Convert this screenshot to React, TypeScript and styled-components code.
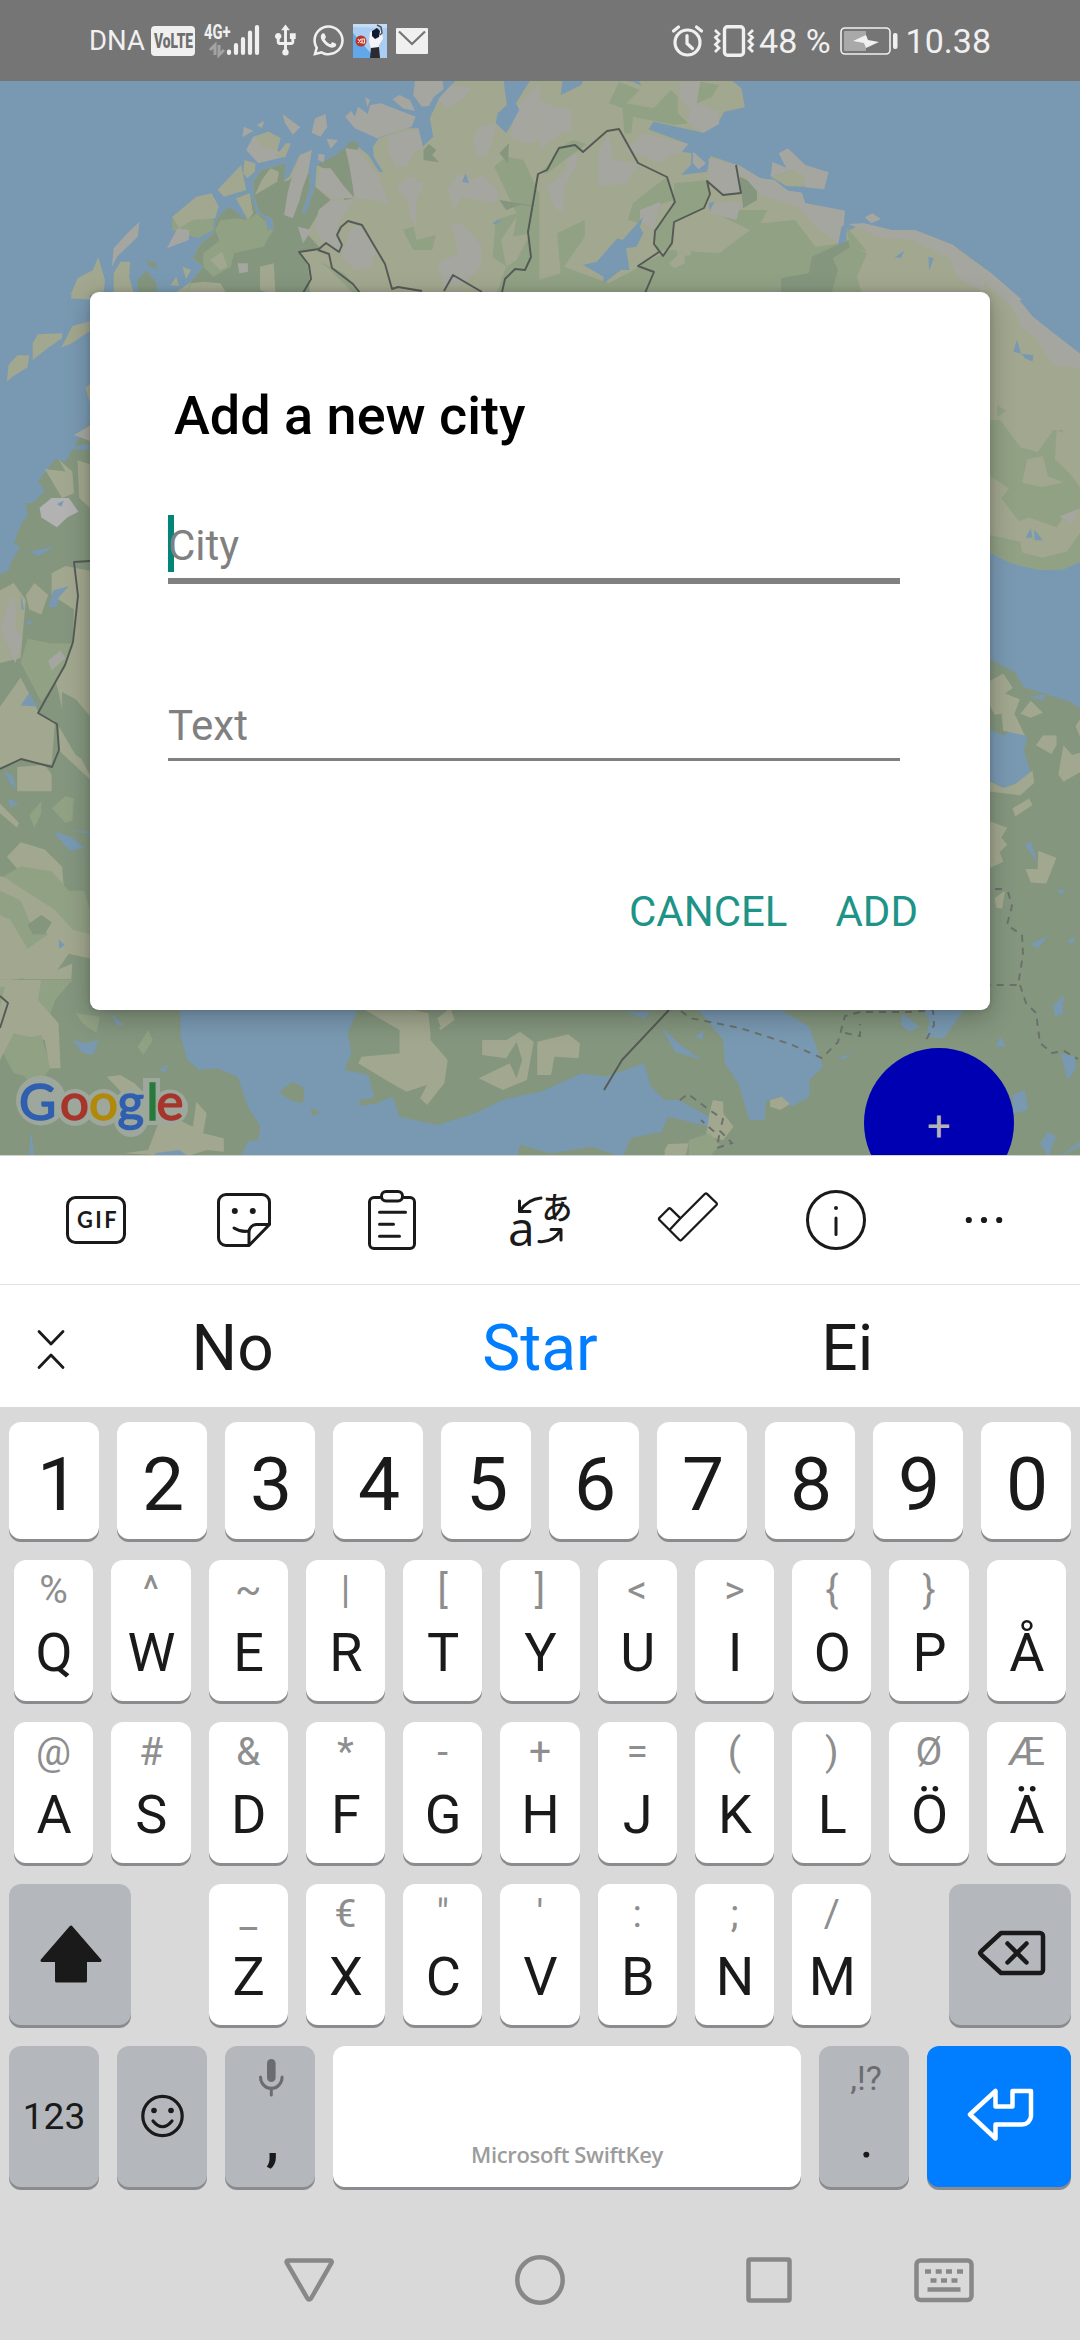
import React from 'react';
import styled, { createGlobalStyle } from 'styled-components';
import { FaWhatsapp } from 'react-icons/fa';
import { MdUsb } from 'react-icons/md';

const GlobalStyle = createGlobalStyle`
  * { box-sizing: border-box; }
  body { margin: 0; background: #d9d9d9; font-family: Roboto, sans-serif; }
  svg { display: block; flex: none; overflow: visible; }
`;

const INK = '#1a1a1a';
const SHADE = '#888';
const PALE = '#f0f0f0';

const Screen = styled.div`
  width: 1080px;
  height: 2340px;
  display: flex;
  flex-direction: column;
  overflow: hidden;
`;

/* ---------- status bar ---------- */

const StatusBar = styled.header`
  height: 81px;
  background: #757575;
  color: ${PALE};
  display: flex;
  align-items: center;
  justify-content: space-between;
  padding: 0 89px 0 89px;
`;
const StatusSide = styled.div`
  display: flex;
  align-items: center;
`;
const StatusText = styled.span<{ $size: number; $left?: number }>`
  font-size: ${(p) => p.$size}px;
  line-height: 40px;
  margin-left: ${(p) => p.$left ?? 0}px;
  white-space: pre;
`;
const Slot = styled.span<{ $left: number }>`
  margin-left: ${(p) => p.$left}px;
  display: flex;
`;

const Signal = () => (
  <svg width="56" height="34" viewBox="203 24 56 34">
    <text transform="translate(203 39) scale(.76 1)" fontSize="19.500" fontWeight="700" fill={PALE}>4G+</text>
    <path d="M209 50l5-5v10M218 45v10l5-5" stroke="#a3a3a3" strokeWidth="3" fill="none" />
    <path d="M228 51.500v1.500M235 45v8M242 39v14M249 32.500v20.500M256 27v26" stroke={PALE} strokeWidth="4.200" strokeLinecap="round" />
  </svg>
);
const Volte = () => (
  <svg width="44" height="30" viewBox="0 0 44 30">
    <rect width="44" height="30" rx="4" fill={PALE} />
    <text transform="translate(3 22) scale(.69 1)" fontSize="20" fontWeight="900" fill="#6e6e6e">VoLTE</text>
  </svg>
);
const PhotoBadge = () => (
  <svg width="34" height="34" viewBox="0 0 34 34">
    <rect width="34" height="34" fill="#a9cdf3" />
    <path d="M0 9L22 34H0z" fill="#62a7ea" />
    <path d="M0 0h34v4L0 3z" fill="#c5dcf4" />
    <path d="M17 8l5-3 7 2 1 8-4 6-1 6-7-2-2-8z" fill="#f4f4f6" />
    <path d="M19 7l5-3 3 3-1 6-4 2-3-3z" fill="#101a33" />
    <path d="M24 1l4 2 1 6-2 2" stroke="#555" fill="none" strokeWidth="1.500" />
    <path d="M18 24l8-1 1 11H17z" fill="#2a2a30" />
    <circle cx="8" cy="17" r="5.500" fill="#b93425" />
    <path d="M5 15l3 4M8 15l-3 4M9 15h2.500v4H9z" stroke="#f7dcd8" strokeWidth="1.200" fill="none" />
  </svg>
);
const Mail = () => (
  <svg width="32" height="26" viewBox="0 0 32 26">
    <rect width="32" height="26" rx="1" fill={PALE} />
    <path d="M3 3.500L16 16 29 3.500" stroke="#757575" strokeWidth="2.200" fill="none" />
  </svg>
);
const Alarm = () => (
  <svg width="31" height="32" viewBox="0 0 31 32" fill="none" stroke={PALE} strokeLinecap="round">
    <circle cx="15.500" cy="17.500" r="12.500" strokeWidth="3.200" />
    <path d="M15 10.500v8l5.500 5" strokeWidth="3.200" strokeLinejoin="round" />
    <path d="M1.500 6l5-4M29.500 6l-5-4" strokeWidth="3.200" />
  </svg>
);
const Vibrate = () => (
  <svg width="42" height="32" viewBox="0 0 42 32" fill="none" stroke={PALE}>
    <rect x="11.500" y="1.700" width="19" height="28.600" rx="3" strokeWidth="3.400" />
    <path d="M2 5l4 4-3.500 3.500L6 16l-3.500 3.500L6 23l-4 4M40 5l-4 4 3.500 3.500L36 16l3.500 3.500L36 23l4 4" strokeWidth="2.800" />
  </svg>
);
const Battery = () => (
  <svg width="59" height="28" viewBox="0 0 59 28">
    <rect x="1" y="1" width="49" height="26" rx="4" fill="none" stroke={PALE} strokeWidth="1.600" />
    <rect x="4" y="4" width="22" height="20" rx="1" fill="#a9a9a9" />
    <path d="M13 14L26 8l2 5 11 2-13 6-2-5z" fill={PALE} />
    <rect x="53" y="6" width="4.500" height="16" rx="2" fill={PALE} />
  </svg>
);

/* ---------- map ---------- */

const TAN = '#a2a78f';
const GREEN = '#91a184';
const DARK = '#84967e';
const ROCK = '#a6a6a1';
const WATER = '#7999b2';
const SNOW = '#b1b2b1';

type Shape = [string, string];

const northWest: Shape[] = [
  [TAN, '1325,240 1275,295 1248,355 1258,410 1228,440 1213,385 1180,385 1100,415 1083,440 1085,470 1113,517 1100,515 1070,465 1045,445 1020,425 985,465 965,490 920,495 915,560 888,640 876,640 900,560 895,500 905,450 870,465 840,530 820,545 828,490 760,510 735,545 738,590 755,640 790,655 795,688 775,685 770,655 745,640 725,580 690,590 717,660 690,655 665,620 630,655 620,700 580,735 560,775 590,800 555,845 500,885 1570,885 1570,240'],
  [DARK, '828,490 760,510 735,545 738,590 755,640 790,655 795,688 770,685 770,655 745,640 725,580 690,590 717,660 665,620 630,655 620,700 580,735 560,775 590,800 555,845 540,885 900,885 895,800 870,757 930,745 890,700 925,640 960,600 915,560 888,640 876,640 900,560 895,500 860,520 840,540 825,545'],
  [DARK, '1005,440 1015,425 1040,425 1040,445 1020,480 1028,595 1000,600 950,510 920,495 975,465'],
  [GREEN, '640,660 690,655 720,660 745,640 772,665 775,690 795,688 765,740 680,760 640,730 625,690'],
  [GREEN, '640,720 680,760 670,800 620,830 590,800 590,760'],
  [GREEN, '500,650 560,660 620,650 620,690 575,715 500,690'],
  [TAN, '570,590 615,580 635,620 625,655 560,660 520,685 500,650'],
  [TAN, '640,560 700,495 715,570 650,590 632,570'],
  [TAN, '710,480 742,490 740,515 718,535 706,520'],
  [TAN, '760,540 785,505 810,515 805,545 740,585'],
  [TAN, '685,595 725,580 735,640 720,660'],
  [ROCK, '715,450 735,410 780,395 815,415 805,450 825,470 750,490'],
  [TAN, '740,410 780,395 815,415 800,450 760,440'],
  [TAN, '800,470 830,430 845,430 828,472'],
  [ROCK, '820,342 872,382 850,404 828,370'],
  [ROCK, '945,342 950,382 930,410 905,398 915,355'],
  [ROCK, '708,380 736,392 704,412'],
  [ROCK, '745,375 768,362 760,384'],
  [ROCK, '948,416 982,420 960,446'],
  [ROCK, '925,462 943,464 940,487 923,480'],
  [ROCK, '1002,350 1020,333 1030,350 1040,320 1068,342 1075,315 1105,310 1207,350 1195,380 1095,415 1030,385'],
  [ROCK, '1140,298 1160,285 1190,300 1205,333 1170,325'],
  [ROCK, '1060,292 1075,300 1067,320'],
  [ROCK, '1205,243 1285,243 1288,268 1260,290 1245,318 1225,320 1200,285'],
  [ROCK, '905,450 895,520 880,560 870,600 850,655 825,645 835,580 845,540 870,470'],
  [ROCK, '930,505 960,505 1000,560 1030,595 960,595 920,560'],
  [ROCK, '1003,445 1040,450 1100,530 1130,610 1090,600 1030,595 1015,500'],
  [ROCK, '925,630 960,600 1030,600 1000,640 975,690 990,750 940,730 915,680'],
  [ROCK, '1130,410 1170,395 1215,385 1228,440 1200,460 1180,500 1150,500 1125,450'],
  [ROCK, '1150,560 1190,530 1230,550 1210,600 1208,680 1190,650 1185,600'],
  [ROCK, '1300,570 1330,520 1370,540 1400,525 1450,575 1440,610 1340,590 1320,630'],
  [ROCK, '1375,420 1390,380 1440,370 1430,430 1410,470 1385,470'],
  [ROCK, '1500,320 1570,245 1570,420 1530,430 1480,410'],
  [ROCK, '1310,670 1340,670 1400,740 1395,800 1350,850 1290,860 1270,790 1330,760'],
  [ROCK, '1020,680 1050,680 1090,750 1080,800 1030,810 990,770'],
  [ROCK, '865,680 905,690 880,730'],
  [ROCK, '1275,295 1310,255 1370,265 1340,300 1290,325'],
  [GREEN, '1435,500 1470,470 1520,480 1570,590 1570,885 1440,885 1470,800 1430,770 1440,660 1500,640'],
  [DARK, '1450,600 1570,620 1510,615 1470,630'],
  [TAN, '1455,720 1500,650 1490,710 1540,700 1500,780 1470,800'],
  [DARK, '1230,450 1245,432 1267,450 1255,465 1275,487 1230,480'],
  [DARK, '1450,460 1478,430 1475,490'],
  [GREEN, '1170,690 1200,680 1210,720 1265,705 1255,750 1200,750'],
  [WATER, '1462,240 1540,240 1498,310 1508,330 1470,400 1440,370 1445,340 1472,315'],
  [WATER, '1342,545 1352,520 1362,550'],
  [WATER, '1430,668 1460,656 1440,675'],
  [ROCK, '405,665 400,710 340,770 325,800 330,745 370,700'],
  [TAN, '285,770 305,840 300,885 205,885 225,835 270,810'],
  [TAN, '350,785 378,785 375,830 390,885 330,885 330,820'],
  [DARK, '400,840 425,812 455,850 455,885 400,885'],
  [DARK, '425,780 455,790 455,808 430,795'],
  [TAN, '495,855 512,830 520,858'],
  [TAN, '530,800 555,810 540,838'],
  [ROCK, '485,745 515,685 550,690 548,720'],
  [TAN, '610,780 645,755 660,800 640,810'],
  [ROCK, '690,790 720,790 720,815 695,820'],
  [TAN, '755,800 795,790 800,885 755,870'],
  [TAN, '555,850 590,845 640,850 660,885 540,885'],
  [GREEN, '930,785 1000,820 1045,880 1030,885 960,810'],
];

const northEast: Shape[] = [
  [TAN, '-2,240 555,240 585,265 595,322 535,335 515,372 475,398 330,365 315,388 430,432 412,455 440,460 438,495 410,525 485,515 495,468 580,497 640,535 680,540 720,572 760,578 770,610 885,632 880,700 940,670 1020,690 1090,690 1200,735 1310,820 1400,900 -2,900'],
  [GREEN, '230,245 290,270 250,310 330,325 380,270 400,290 400,340 430,370 390,375 270,350 265,400 245,400 240,325 200,310'],
  [GREEN, '465,245 520,255 500,290 455,310'],
  [ROCK, '405,245 465,245 455,310 520,335 520,372 475,398 430,370 435,330 405,290'],
  [ROCK, '0,300 40,320 90,330 90,395 60,400 0,450'],
  [ROCK, '300,400 430,432 412,455 380,465 350,490 250,450'],
  [ROCK, '75,470 110,460 105,500 70,560 65,640 40,620 20,560 80,510'],
  [ROCK, '170,450 200,400 210,480 290,490 250,550 170,560'],
  [GREEN, '-2,520 40,480 55,445 95,420 135,432 20,520'],
  [GREEN, '390,550 490,540 490,580 480,625 385,670 385,740 340,760 330,690 370,650 385,610'],
  [GREEN, '255,660 270,610 330,560 370,530 390,600 320,620 290,670'],
  [GREEN, '490,630 660,630 640,670 740,660 800,740 880,730 950,760 920,830 940,900 300,900 330,820 290,795 380,750 520,760 610,690'],
  [GREEN, '-2,840 60,820 50,700 130,660 130,710 70,800 200,850 290,800 330,820 300,900 -2,900'],
  [TAN, '390,690 425,680 430,705 520,705 515,735 430,730 440,765 400,770'],
  [TAN, '375,790 420,745 420,790 390,805'],
  [DARK, '580,530 630,555 630,600 590,625'],
  [DARK, '790,770 895,720 900,740 850,775 865,810 845,885 830,900 700,900 700,835 780,820'],
  [ROCK, '490,475 580,497 640,535 680,540 720,572 760,578 770,610 885,632 880,700 865,730 800,680 750,620 640,585 580,515 580,580 530,580 490,540'],
  [ROCK, '500,610 585,605 570,660 495,640'],
  [ROCK, '290,630 350,605 330,690 290,660'],
  [ROCK, '675,485 715,503 693,460 720,445 770,495 838,517 825,568 770,562 735,510 670,530'],
  [TAN, '670,530 735,510 770,530 765,560 715,558'],
  [ROCK, '445,455 482,490 460,508 443,490'],
  [ROCK, '943,652 965,640 990,657 962,670'],
  [ROCK, '895,672 940,670 1020,690 1085,690 1200,735 1220,755 1310,820 1400,900 1330,900 1210,830 1190,775 1080,720 1000,715'],
  [GREEN, '890,680 950,755 900,740'],
  [WATER, '125,795 165,785 225,715 240,720 300,650 290,680 300,700 280,740 250,745 260,810 235,810 185,850 185,830'],
  [WATER, '60,285 65,243 125,243 120,255'],
  [WATER, '220,240 285,240 295,258 270,245'],
  [WATER, '1030,772 1058,752 1048,774'],
  [WATER, '1128,770 1143,775 1130,812'],
  [WATER, '875,680 890,670 890,720 865,740'],
  [WATER, '490,610 508,605 492,632'],
];

const west: Shape[] = [
  [DARK, '265,285 235,320 190,375 160,370 110,415 130,435 95,460 75,460 80,485 60,505 40,545 60,550 25,590 -2,605 -2,1600 265,1600'],
  [TAN, '20,210 25,175 50,155 85,155 80,180 35,200'],
  [TAN, '95,165 95,130 110,112 180,110 180,120 140,140'],
  [TAN, '178,140 210,95 261,85 261,105 210,130'],
  [TAN, '205,38 225,0 260,0 261,40'],
  [TAN, '261,215 248,222 261,255'],
  [ROCK, '215,320 261,300 261,332'],
  [TAN, '130,390 190,395 170,370 210,395 215,440 180,450'],
  [TAN, '225,372 261,380 261,470 230,450'],
  [SNOW, '115,470 150,450 200,450 228,478 195,490 165,510 120,490'],
  [TAN, '150,605 190,590 261,600 261,1020 190,920 170,850 150,800 210,760 215,680 150,650'],
  [GREEN, '80,740 150,750 210,750 190,800 120,870 90,830 60,790'],
  [TAN, '0,640 40,625 75,660 60,780 0,790'],
  [ROCK, '10,700 30,655 45,660 45,720 65,740 45,790 5,725'],
  [TAN, '75,650 100,625 140,650 120,690 85,680'],
  [ROCK, '140,785 175,765 190,780 150,805'],
  [TAN, '0,880 60,820 115,895 160,910 150,1000 60,990 0,1005'],
  [TAN, '50,1005 130,1000 150,1020 150,1055 50,1055'],
  [TAN, '170,920 220,980 261,1000 261,1030 170,970'],
  [DARK, '180,850 220,865 261,900 261,1020 230,980 180,920'],
  [TAN, '0,1080 55,1120 50,1130 0,1100'],
  [GREEN, '85,1105 120,1075 120,1100 100,1130'],
  [GREEN, '150,1090 190,1065 215,1070 210,1115 190,1120'],
  [TAN, '20,1190 60,1160 130,1175 180,1210 185,1250 210,1300 261,1330 261,1400 200,1390 150,1440 0,1480 0,1230 80,1240'],
  [GREEN, '10,1230 60,1210 150,1220 200,1260 245,1260 261,1300 261,1350 210,1340 160,1300 50,1250'],
  [GREEN, '0,1260 60,1280 90,1330 140,1350 80,1380 30,1320 0,1310'],
  [DARK, '80,1330 120,1310 150,1325 130,1350 95,1350'],
  [GREEN, '0,1480 60,1440 200,1470 261,1480 261,1600 0,1600'],
  [TAN, '0,1500 20,1490 60,1460 90,1500 80,1600 0,1600'],
  [TAN, '110,1440 210,1410 205,1470 160,1450'],
  [WATER, '0,600 30,585 25,600 0,607'],
  [WATER, '85,560 160,550 110,570'],
  [WATER, '140,675 155,640 200,632 170,655 165,675'],
  [WATER, '60,650 70,680 62,680'],
  [WATER, '80,700 95,708 78,712'],
  [WATER, '60,878 85,852 108,880'],
  [WATER, '10,1010 40,1025 45,1050 30,1040'],
  [WATER, '22,1070 55,1080 30,1088'],
  [WATER, '155,1138 210,1150 245,1172 205,1178 180,1160'],
  [WATER, '210,1137 261,1138 261,1143'],
  [WATER, '170,1360 188,1372 172,1380'],
  [WATER, '200,345 255,338 261,350 220,350'],
  [WATER, '165,462 185,455 178,468'],
];

const east: Shape[] = [
  [TAN, '1290,0 1320,0 1570,180 1570,580 1520,597 1450,598 1370,585 1300,560'],
  [ROCK, '1285,0 1325,0 1385,35 1430,75 1480,103 1570,153 1570,183 1490,175 1440,120 1400,98 1370,55'],
  [GREEN, '1300,290 1335,288 1395,345 1445,355 1490,310 1520,310 1500,355 1530,395 1570,400 1570,470 1520,490 1500,510 1420,490 1390,497 1340,450 1362,430 1300,400'],
  [TAN, '1400,418 1415,370 1460,363 1475,405 1520,418 1455,427'],
  [TAN, '1500,310 1570,330 1570,430 1540,400 1495,370'],
  [GREEN, '1300,525 1395,540 1400,562 1460,573 1530,560 1570,520 1570,580 1520,597 1450,598 1370,585 1300,560'],
  [ROCK, '1508,488 1565,472 1545,505'],
  [GREEN, '1327,258 1353,270 1328,282'],
  [WATER, '1375,148 1385,123 1397,152'],
  [WATER, '1397,152 1433,155 1430,168 1410,162'],
  [WATER, '1410,532 1425,512 1430,532'],
  [WATER, '1435,515 1460,537 1436,537'],
  [DARK, '1300,780 1380,810 1405,840 1450,850 1540,870 1570,885 1570,1600 1300,1600'],
  [WATER, '1300,925 1345,940 1390,920 1415,945 1405,970 1425,1020 1380,1040 1345,1048 1300,1030'],
  [TAN, '1300,830 1345,812 1373,842 1350,853 1393,865 1378,895 1408,940 1345,930 1340,895 1320,897 1300,870'],
  [TAN, '1395,895 1425,868 1460,893 1425,903'],
  [TAN, '1440,960 1460,940 1500,940 1500,960 1485,978'],
  [TAN, '1505,1020 1520,960 1545,980 1570,975 1570,1015 1520,1035'],
  [TAN, '1555,920 1570,905 1570,945'],
  [TAN, '1300,1032 1345,1048 1380,1040 1430,1012 1435,1038 1395,1063 1300,1055'],
  [TAN, '1372,1090 1420,1070 1430,1083 1380,1107'],
  [TAN, '1300,1115 1357,1130 1340,1150 1357,1165 1335,1180 1345,1200 1300,1215'],
  [TAN, '1410,1215 1445,1215 1447,1178 1500,1192 1470,1245 1425,1243'],
  [TAN, '1320,1275 1350,1260 1342,1297 1325,1295'],
  [WATER, '1408,1165 1425,1158 1445,1203'],
  [WATER, '1500,1260 1528,1256 1515,1268'],
  [WATER, '1425,1370 1475,1353 1445,1380'],
  [WATER, '1530,1365 1557,1353 1545,1370'],
  [WATER, '1487,1500 1522,1475 1515,1518 1495,1518'],
  [WATER, '1420,860 1470,855 1460,868'],
];

const south: Shape[] = [
  [DARK, '-2,85 1570,85 1570,530 -2,530'],
  [DARK, '-2,-2 132,-2 132,120 -2,120'],
  [GREEN, '0,0 105,0 80,60 60,180 75,260 60,300 20,280 0,200'],
  [TAN, '10,0 60,0 55,60 85,130 88,265 72,265 65,180 20,160 0,240 0,80'],
  [GREEN, '20,180 60,165 72,260 40,300 15,240'],
  [GREEN, '110,100 145,110 140,160 120,130'],
  [GREEN, '215,150 222,180 208,225 200,200'],
  [WATER, '262,85 520,85 505,160 510,220 500,270 535,285 545,370 570,350 580,410 635,435 690,400 730,360 785,335 845,280 880,290 935,250 945,320 965,360 985,360 1030,410 1030,440 970,410 960,455 915,475 905,530 350,530 360,485 375,480 378,440 360,380 345,290 315,265 290,270 272,240 262,165'],
  [WATER, '1012,85 1130,85 1175,140 1195,260 1175,300 1175,350 1150,380 1130,350 1112,365 1110,420 1088,420 1072,310 1052,250 1050,180'],
  [WATER, '960,140 985,190 1018,240 980,215'],
  [WATER, '905,95 945,95 935,115'],
  [WATER, '1340,90 1400,90 1370,175 1345,170 1350,120'],
  [WATER, '1310,100 1335,140 1320,155 1308,135'],
  [DARK, '405,335 425,305 442,325 440,370 420,360'],
  [DARK, '450,385 465,395 455,410'],
  [DARK, '755,495 800,520 860,500 900,530 750,530'],
  [DARK, '522,360 550,350 550,370 522,378'],
  [TAN, '530,90 655,90 660,120 640,150 625,120 625,180 650,240 645,310 620,375 610,355 620,315 590,335 560,300 520,250 525,230 580,220 580,150'],
  [DARK, '600,90 650,90 635,115 640,140 625,160 622,100'],
  [TAN, '700,180 735,180 755,155 775,185 770,240 765,300 730,330 695,295 740,250 750,295 758,240 750,185 735,235 700,225'],
  [TAN, '780,185 825,163 842,190 840,235 805,230 800,285 780,285'],
  [TAN, '1035,360 1050,365 1050,400 1065,440 1050,480 1025,470 1030,400'],
  [TAN, '1118,360 1135,350 1147,372 1133,390 1118,380'],
  [TAN, '965,510 970,492 1000,490 995,530 965,530'],
  [GREEN, '1000,480 1030,460 1045,495 1030,530 1000,530'],
  [TAN, '155,290 175,285 195,310 240,400 280,440 285,365 300,400 295,460 325,475 325,515 300,510 270,530 180,520 215,510 230,430 205,400'],
  [WATER, '225,520 260,510 275,530 225,530'],
  [WATER, '105,180 125,190 143,180 135,225 120,218'],
  [WATER, '160,100 180,135 170,135'],
  [WATER, '1530,80 1543,45 1543,100 1532,110'],
  [WATER, '1445,200 1452,170 1460,198'],
  [WATER, '1470,345 1488,330 1492,390 1472,400'],
  [WATER, '1215,235 1237,220 1225,238'],
  [WATER, '1510,490 1522,455 1533,470 1522,530'],
  [WATER, '1540,220 1560,230 1562,265 1550,300'],
  [WATER, '1538,530 1568,485 1568,500'],
  [WATER, '230,272 245,252 240,275'],
  [WATER, '45,450 50,530 42,530'],
  [WATER, '1010,170 1022,150 1020,180'],
  [TAN, '0,-2 20,-2 10,20 0,20'],
];

const sectors = [
  { transform: 'scale(.34439 .33333)', shapes: northWest },
  { transform: 'translate(540 0) scale(.34439 .33333)', shapes: northEast },
  { transform: 'translate(0 280) scale(.34439 .48469)', shapes: west },
  { transform: 'translate(540 280) scale(.34439 .48469)', shapes: east },
  { transform: 'translate(0 980) scale(.68878 .33333)', shapes: south },
];

const MapStage = styled.main`
  position: relative;
  height: 1074px;
  background: ${WATER};
  overflow: hidden;
`;

const MapCanvas = () => (
  <svg width="1080" height="1074" viewBox="0 81 1080 1074">
    {sectors.map((s, i) => (
      <g key={i} transform={s.transform}>
        {s.shapes.map(([fill, points], k) => (
          <polygon key={k} fill={fill} points={points} />
        ))}
      </g>
    ))}
    <g fill="none" stroke="#545a55" strokeWidth="1.900" strokeLinejoin="round">
      <path d="M303 293L311 279 309 265 299 252 319 249 326 243 339 252 342 245 337 235 341 227 348 221 362 225 385 264 392 289 398 287 422 291M318 250L329 254 332 268 353 284 360 293M444 291L453 275 482 292M502 292L505 279 515 269 525 270 531 257 528 232 538 174 547 170 559 148 575 145 583 152 607 131 619 129 638 163 667 177 675 202 655 231 654 244 663 256 672 243 674 222 704 208 710 194 707 181 723 195 741 193 736 165M659 252L638 266 654 272 645 293" />
      <path d="M90 561L74 562 78 596 73 642 65 665 38 713 57 724 59 750 52 767 21 759 0 769M0 996L8 1003 0 1028M669 1010L622 1060 604 1090" />
    </g>
    <g fill="none" stroke="#6b706a" strokeWidth="1.900" strokeDasharray="7 6">
      <path d="M681 1011L690 1018 740 1028 790 1044 822 1058 838 1042 845 1016 860 1012 910 1012 933 1010 934 1025 925 1042M845 1033l15 3 0-12M995 889h9M1008 892l4 14-5 19 15 10 1 20-5 30h-28M1020 985l6 18 10 10 4 30 12 10 12-2 14 8M680 1100l8-6 20 15 15 10-3 12 12 12-15 5 2-12-18-16" />
    </g>
  </svg>
);

const GoogleMark = styled.svg`
  position: absolute;
  left: 10px;
  bottom: 13px;
`;
const logoLetters: [string, number, string][] = [
  ['G', 9, '#2f5fae'],
  ['o', 50, '#a6352b'],
  ['o', 79, '#b1890b'],
  ['g', 107.5, '#2f5fae'],
  ['l', 136.5, '#267a3c'],
  ['e', 146.5, '#a6352b'],
];
const GoogleLogo = () => (
  <GoogleMark width="190" height="70" viewBox="0 0 190 70" fontFamily="Lato, sans-serif" fontSize="51">
    <g fill="#9da79c">
      <circle cx="31" cy="28.500" r="25" />
      <circle cx="65" cy="35.500" r="18.500" />
      <circle cx="93.500" cy="35.500" r="18.500" />
      <circle cx="121.500" cy="35.500" r="18.500" />
      <circle cx="121" cy="48" r="17" />
      <rect x="133" y="6" width="17" height="47" />
      <circle cx="160" cy="35.500" r="18" />
    </g>
    {logoLetters.map(([c, x, color], i) => (
      <text key={i} x={x} y="48" fill={color} stroke={color} strokeWidth="1.600">{c}</text>
    ))}
  </GoogleMark>
);

const Fab = styled.button`
  position: absolute;
  left: 864px;
  top: 967px;
  width: 150px;
  height: 150px;
  border: 0;
  padding: 7px 0 0;
  border-radius: 50%;
  background: #0000b3;
  color: #b3b3b3;
  font: 400 42px/50px Roboto, sans-serif;
`;

/* ---------- dialog ---------- */

const Dialog = styled.section`
  position: absolute;
  left: 90px;
  top: 211px;
  width: 900px;
  height: 718px;
  padding: 94px 90px 0 78px;
  display: flex;
  flex-direction: column;
  background: #fff;
  border-radius: 9px;
  box-shadow: 0 8px 26px rgba(0, 0, 0, 0.24), 0 0 6px rgba(0, 0, 0, 0.14);
`;
const Title = styled.h1`
  margin: 0 0 75px 6px;
  font-weight: 500;
  font-size: 54px;
  line-height: 60px;
  color: #000;
`;
const Field = styled.div<{ $line: number }>`
  position: relative;
  padding-bottom: 7px;
  margin-bottom: ${(p) => (p.$line > 3 ? 117 : 126)}px;
  border-bottom: ${(p) => p.$line}px solid #808080;
  color: #808080;
  font-size: 42px;
  line-height: 50px;
`;
const Caret = styled.i`
  position: absolute;
  left: 0;
  top: -6px;
  width: 6px;
  height: 57px;
  background: #008577;
`;
const Placeholder = styled.span`
  position: relative;
`;
const Actions = styled.div`
  display: flex;
  justify-content: flex-end;
  gap: 48px;
  margin-right: -18px;
`;
const Action = styled.button`
  border: 0;
  padding: 0;
  background: none;
  color: #1e9488;
  font: 400 42px/50px Roboto, sans-serif;
`;

/* ---------- keyboard toolbar and suggestions ---------- */

const Toolbar = styled.nav`
  height: 130px;
  padding: 0 22px;
  display: grid;
  grid-template-columns: repeat(7, 1fr);
  place-items: center;
  background: #fff;
  border-top: 1px solid #cfd4ce;
  border-bottom: 1px solid #e3e3e3;
`;
const Glyph = styled.svg.attrs({ width: 60, height: 60, viewBox: '0 0 60 60' })<{ $thin?: boolean }>`
  fill: none;
  stroke: ${INK};
  stroke-width: ${(p) => (p.$thin ? 2.3 : 3)};
  stroke-linecap: round;
  stroke-linejoin: round;
  text, .dot { fill: ${INK}; stroke: none; }
`;
const Suggestions = styled.div`
  position: relative;
  height: 122px;
  padding: 0 79px;
  display: grid;
  grid-template-columns: repeat(3, 1fr);
  align-items: center;
  justify-items: center;
  background: #fff;
`;
const Word = styled.span<{ $accent?: boolean }>`
  font-size: 64px;
  line-height: 72px;
  padding-top: 5px;
  color: ${(p) => (p.$accent ? '#007eff' : INK)};
`;
const Collapse = styled.svg`
  position: absolute;
  left: 36px;
  top: 43px;
`;

/* ---------- keys ---------- */

const Keyboard = styled.div`
  height: 783px;
  padding-top: 15px;
  display: flex;
  flex-direction: column;
  gap: 21px;
  background: #d9d9d9;
`;
const KeyRow = styled.div<{ $inset: number; $height?: number; $spread?: boolean }>`
  height: ${(p) => p.$height ?? 141}px;
  padding: 0 ${(p) => p.$inset}px;
  display: flex;
  gap: ${(p) => (p.$spread ? 0 : 18)}px;
  justify-content: space-between;
`;
const Cluster = styled.div`
  width: 662.900px;
  display: flex;
  gap: 18px;
`;
const Key = styled.div<{ $tone?: 'grey' | 'blue'; $width?: number; $center?: boolean }>`
  ${(p) => (p.$width ? `width: ${p.$width}px; flex: none;` : 'flex: 1 1 0; min-width: 0;')}
  display: flex;
  flex-direction: column;
  align-items: center;
  justify-content: ${(p) => (p.$center ? 'center' : 'flex-start')};
  padding-top: ${(p) => (p.$center ? 0 : 11)}px;
  border-radius: 12px;
  color: ${INK};
  background: ${(p) => (p.$tone === 'grey' ? '#b4b8bd' : p.$tone === 'blue' ? '#007eff' : '#fff')};
  box-shadow: 0 3px 0 #898b8e;
`;
const Digit = styled.span<{ $nudge: number }>`
  font-size: 75px;
  line-height: 75px;
  padding: 8px 0 0 ${(p) => p.$nudge}px;
`;
const Hint = styled.span<{ $size?: number }>`
  height: 39px;
  margin-bottom: 16px;
  font-size: ${(p) => p.$size ?? 39}px;
  line-height: ${(p) => (p.$size ? 43 : 39)}px;
  padding-left: ${(p) => (p.$size ? 4 : 0)}px;
  color: ${(p) => (p.$size ? '#6b6c6f' : '#8e8e8e')};
`;
const Letter = styled.span<{ $weight?: number; $nudge?: number }>`
  font-size: 54px;
  line-height: 54px;
  font-weight: ${(p) => p.$weight ?? 400};
  padding-left: ${(p) => p.$nudge ?? 1}px;
`;
const Mode = styled.span`
  font-size: 37px;
  line-height: 40px;
`;
const Brand = styled.span`
  margin-top: 82px;
  font: 600 22px/30px 'Open Sans', 'Noto Sans', sans-serif;
  letter-spacing: -0.35px;
  color: #9c9c9c;
`;

const NavBar = styled.footer`
  height: 150px;
  background: #d9d9d9;
  display: flex;
`;

const digits = [...'1234567890'];
const rowQ: [string, string][] = [['%', 'Q'], ['^', 'W'], ['~', 'E'], ['|', 'R'], ['[', 'T'], [']', 'Y'], ['<', 'U'], ['>', 'I'], ['{', 'O'], ['}', 'P'], ['', 'Å']];
const rowA: [string, string][] = [['@', 'A'], ['#', 'S'], ['&', 'D'], ['*', 'F'], ['-', 'G'], ['+', 'H'], ['=', 'J'], ['(', 'K'], [')', 'L'], ['Ø', 'Ö'], ['Æ', 'Ä']];
const rowZ: [string, string][] = [['_', 'Z'], ['€', 'X'], ['"', 'C'], ["'", 'V'], [':', 'B'], [';', 'N'], ['/', 'M']];

const LetterKeys = ({ keys }: { keys: [string, string][] }) => (
  <>
    {keys.map(([hint, letter]) => (
      <Key key={letter}>
        <Hint>{hint}</Hint>
        <Letter>{letter}</Letter>
      </Key>
    ))}
  </>
);

export default function App() {
  return (
    <Screen>
      <GlobalStyle />
      <StatusBar>
        <StatusSide>
          <StatusText $size={27.5}>DNA</StatusText>
          <Slot $left={6}><Volte /></Slot>
          <Slot $left={9}><Signal /></Slot>
          <Slot $left={8}><MdUsb size={35} color={PALE} /></Slot>
          <Slot $left={8}><FaWhatsapp size={35} color={PALE} /></Slot>
          <Slot $left={7}><PhotoBadge /></Slot>
          <Slot $left={9}><Mail /></Slot>
        </StatusSide>
        <StatusSide>
          <Slot $left={0}><Alarm /></Slot>
          <Slot $left={10}><Vibrate /></Slot>
          <StatusText $size={34} $left={4}>48 %</StatusText>
          <Slot $left={9}><Battery /></Slot>
          <StatusText $size={34} $left={7}>10.38</StatusText>
        </StatusSide>
      </StatusBar>

      <MapStage>
        <MapCanvas />
        <GoogleLogo />
        <Fab>+</Fab>
        <Dialog>
          <Title>Add a new city</Title>
          <Field $line={6}>
            <Caret />
            <Placeholder>City</Placeholder>
          </Field>
          <Field $line={3}>
            <Placeholder>Text</Placeholder>
          </Field>
          <Actions>
            <Action>CANCEL</Action>
            <Action>ADD</Action>
          </Actions>
        </Dialog>
      </MapStage>

      <Toolbar>
        <Glyph>
          <rect x="1.500" y="7.500" width="57" height="45" rx="8" />
          <text x="10.500" y="38.500" fontFamily="Lato, sans-serif" fontWeight="700" fontSize="23.500" letterSpacing="2.600" transform="translate(1.200 0) scale(.93 1)">GIF</text>
        </Glyph>
        <Glyph>
          <path d="M35 55.500H12a7.500 7.500 0 0 1-7.500-7.500V12A7.500 7.500 0 0 1 12 4.500h36a7.500 7.500 0 0 1 7.500 7.500v22.500L35 55.500V42a7.500 7.500 0 0 1 7.500-7.500h13M20 38q7 4.500 15 3" />
          <circle className="dot" cx="20.800" cy="21" r="3" />
          <circle className="dot" cx="38.800" cy="21" r="3" />
        </Glyph>
        <Glyph>
          <path d="M18 7.500h-6A4.500 4.500 0 0 0 7.500 12v42a4.500 4.500 0 0 0 4.500 4.500h36a4.500 4.500 0 0 0 4.500-4.500V12A4.500 4.500 0 0 0 48 7.500h-6M17.500 22.300h26M17.500 34.300h14M17.500 46.300h20" />
          <rect x="19.500" y="1.500" width="21" height="9.500" rx="4.500" />
        </Glyph>
        <Glyph>
          <text x="-2" y="55.500" fontFamily="'Open Sans', sans-serif" fontSize="48">a</text>
          <text x="31.500" y="28.500" fontFamily="'Noto Sans CJK JP', sans-serif" fontWeight="500" fontSize="31">あ</text>
          <path d="M9.500 11v10.500H20M10 21Q18 9 31 8M41 39.500h10V50M29 51.500Q43 53 50.500 40" />
        </Glyph>
        <Glyph $thin>
          <path d="M1.500 27.700l9-9a1.500 1.500 0 0 1 2 0L22.500 28.300 47 3.800a1.500 1.500 0 0 1 2 0l9.500 9.200a1.500 1.500 0 0 1 0 2L23.500 50a1.500 1.500 0 0 1-2 0L1.500 30a1.500 1.500 0 0 1 0-2.300zM11.500 40l11-11.700" />
        </Glyph>
        <Glyph>
          <circle cx="30" cy="30" r="28.500" />
          <circle className="dot" cx="30" cy="18" r="2" />
          <path d="M30 28v16.500" />
        </Glyph>
        <Glyph>
          <circle className="dot" cx="14.800" cy="30" r="3.100" />
          <circle className="dot" cx="30" cy="30" r="3.100" />
          <circle className="dot" cx="45.200" cy="30" r="3.100" />
        </Glyph>
      </Toolbar>

      <Suggestions>
        <Collapse width="30" height="42" viewBox="0 0 30 42" fill="none" stroke={INK} strokeWidth="2.800" strokeLinecap="round" strokeLinejoin="round">
          <path d="M3 3.500l12 12.500L27 3.500M3 39.500l12-12.500 12 12.500" />
        </Collapse>
        <Word>No</Word>
        <Word $accent>Star</Word>
        <Word>Ei</Word>
      </Suggestions>

      <Keyboard>
        <KeyRow $inset={9} $height={117}>
          {digits.map((d) => (
            <Key key={d} $center>
              <Digit $nudge={d === '1' ? 8 : 2}>{d}</Digit>
            </Key>
          ))}
        </KeyRow>
        <KeyRow $inset={14}><LetterKeys keys={rowQ} /></KeyRow>
        <KeyRow $inset={14}><LetterKeys keys={rowA} /></KeyRow>
        <KeyRow $inset={9} $spread>
          <Key $tone="grey" $width={122} $center>
            <svg width="62" height="58" viewBox="-1 1.500 62 58" fill={INK} stroke={INK} strokeWidth="3" strokeLinejoin="round">
              <path d="M31 2.500L60 36H45.500V56.500H16.500V36H2z" />
            </svg>
          </Key>
          <Cluster><LetterKeys keys={rowZ} /></Cluster>
          <Key $tone="grey" $width={122} $center>
            <svg width="68" height="48" viewBox="-1 1.500 68 48" fill="none" stroke={INK} strokeWidth="4.500" strokeLinecap="round" strokeLinejoin="round">
              <path d="M24 3.500H63a3 3 0 0 1 3 3v34a3 3 0 0 1-3 3H24L4 25q-1.500-1.500 0-3zM30.500 14l19 19M49.500 14l-19 19" />
            </svg>
          </Key>
        </KeyRow>
        <KeyRow $inset={9}>
          <Key $tone="grey" $width={90} $center><Mode>123</Mode></Key>
          <Key $tone="grey" $width={90} $center>
            <svg width="44" height="44" viewBox="0 0 44 44" fill="none" stroke={INK} strokeWidth="3.200" strokeLinecap="round">
              <circle cx="22.500" cy="21" r="19.700" />
              <path d="M13 26q9.500 11.500 19 0" />
              <g fill={INK} stroke="none"><circle cx="14" cy="15.500" r="2.800" /><circle cx="31" cy="15.500" r="2.800" /></g>
            </svg>
          </Key>
          <Key $tone="grey" $width={90}>
            <svg width="26" height="57" viewBox="-1 -2 26 57" fill="none" stroke="#6b6c6f" strokeWidth="3" strokeLinecap="round">
              <rect x="9" y="0" width="8.600" height="23" rx="4.300" fill="#6b6c6f" stroke="none" />
              <path d="M2.500 18a10.800 11.500 0 0 0 21.600 0M13.300 29v7" />
            </svg>
            <Letter $weight={700} $nudge={5}>,</Letter>
          </Key>
          <Key><Brand>Microsoft SwiftKey</Brand></Key>
          <Key $tone="grey" $width={90}>
            <Hint $size={34}>,!?</Hint>
            <Letter $nudge={5}>.</Letter>
          </Key>
          <Key $tone="blue" $width={144} $center>
            <svg width="68" height="56" viewBox="-2 1 68 56" fill="none" stroke="#fff" strokeWidth="4.500" strokeLinejoin="round">
              <path d="M3 26.500L28.500 3V18.500H45.500V3H64V28a9 9 0 0 1-9 8.500H28.500V50.500z" />
            </svg>
          </Key>
        </KeyRow>
      </Keyboard>

      <NavBar>
        <svg width="1080" height="150" viewBox="0 0 1080 150" fill="none" stroke={SHADE} strokeWidth="4.500" strokeLinejoin="round">
          <path d="M288 70.500H330.500a1.500 1.500 0 0 1 1 2.300L311 108.500a2 2 0 0 1-3.500 0L286.800 72.800a1.500 1.500 0 0 1 1.200-2.300z" />
          <circle cx="540" cy="90" r="22.700" />
          <rect x="748.500" y="69.500" width="41" height="41" rx="1.500" />
          <rect x="916.500" y="70.500" width="55" height="39.500" rx="4" />
          <path d="M925 81.500h6M935.700 81.500h6M946 81.500h6M957 81.500h6M930.500 90.500h6M941 90.500h6M951.500 90.500h6M927.500 99.500h33" />
        </svg>
      </NavBar>
    </Screen>
  );
}
